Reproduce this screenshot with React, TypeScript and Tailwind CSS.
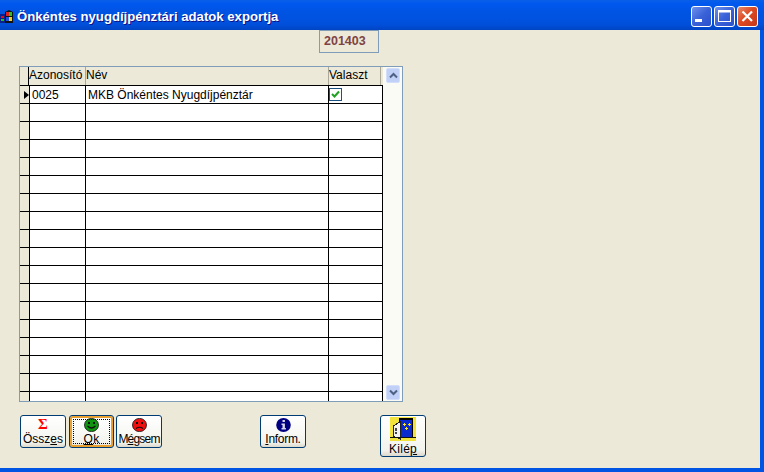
const FONT = '[font-family:"Liberation_Sans",Arial,sans-serif]';

const ROW_COUNT = 18;

function MinimizeIcon() {
  return (
    <svg width="21" height="21" viewBox="0 0 21 21" className="shrink-0">
      <rect x="4" y="13" width="7" height="3" fill="#fff" />
    </svg>
  );
}

function MaximizeIcon() {
  return (
    <svg width="21" height="21" viewBox="0 0 21 21" fill="none" className="shrink-0">
      <rect x="4.500" y="4.500" width="12" height="11" stroke="#fff" />
      <rect x="4" y="4" width="13" height="2.500" fill="#fff" />
    </svg>
  );
}

function CloseIcon() {
  return (
    <svg width="21" height="21" viewBox="0 0 21 21" className="shrink-0">
      <path d="M5.500 5.500l9.500 9.500M15 5.500l-9.500 9.500" stroke="#fff" strokeWidth="2.200" />
    </svg>
  );
}

function WindowIcon() {
  return (
    <svg width="14" height="14" viewBox="0 0 14 14" className="shrink-0">
      <rect x="0" y="4" width="5" height="9" fill="#0c1f8a" />
      <rect x="1" y="6" width="3" height="2" fill="#d11" />
      <rect x="1" y="9" width="3" height="2" fill="#1c1" />
      <path d="M5 2l4-2 4 2v11H5z" fill="#111" />
      <rect x="6" y="2" width="3" height="4" fill="#e02020" />
      <rect x="9" y="2" width="3" height="4" fill="#20c030" />
      <rect x="6" y="7" width="3" height="4" fill="#2050e0" />
      <rect x="9" y="7" width="3" height="4" fill="#f0d020" />
    </svg>
  );
}

function Smiley({ color, sad }: { color: string; sad?: boolean }) {
  return (
    <svg width="15" height="14" viewBox="0 0 15 14" className="mt-[2px]">
      <ellipse cx="7.500" cy="7" rx="7" ry="6.600" fill={color} stroke="#111" strokeWidth="0.800" />
      <rect x="4" y="4" width="2" height="2" fill="#111" />
      <rect x="9" y="4" width="2" height="2" fill="#111" />
      <path d={sad ? 'M4 10.500q3.500-2.500 7 0' : 'M3.500 8q4 4 8 0'} stroke="#111" fill="none" strokeWidth="1.200" />
    </svg>
  );
}

function InfoIcon() {
  return (
    <svg width="15" height="14" viewBox="0 0 15 14" className="mt-[2px]">
      <ellipse cx="7.500" cy="7" rx="7.300" ry="7" fill="#000080" />
      <rect x="6.500" y="2" width="2.400" height="2" fill="#d8d8e8" />
      <path d="M5.500 5.500h3.400v4.500h1v1.500H5.500V10h1V7h-1z" fill="#d8d8e8" />
    </svg>
  );
}

function DoorIcon() {
  return (
    <svg width="26" height="24" viewBox="0 0 26 24" shapeRendering="crispEdges" className="mt-px">
      <rect width="26" height="24" fill="#f2e23c" />
      <rect x="9" y="1" width="14" height="19" fill="#000" />
      <rect x="10" y="3" width="12" height="17" fill="#0a2ad0" />
      <path d="M3 9l7-4v17l-7-3z" fill="#f2f2f2" stroke="#222" />
      <rect x="5" y="11" width="2" height="3" fill="#444" />
      <rect x="5" y="15" width="2" height="2" fill="#444" />
      <path d="M14 6h1v1h1v1h-1v1h-1V8h-1V7h1zM19 6h1v1h1v1h-1v1h-1V8h-1V7h1zM16 10h1v1h1v1h-1v1h-1v-1h-1v-1h1z" fill="#ffe800" />
      <rect x="0" y="20" width="26" height="1" fill="#111" />
    </svg>
  );
}

function CaptionButton({ tone, children }: { tone: 'blue' | 'red'; children: React.ReactNode }) {
  const bg =
    tone === 'red'
      ? 'bg-[linear-gradient(135deg,#e98a6c,#dd4a22_45%,#c5371a)]'
      : 'bg-[linear-gradient(135deg,#6f90ea,#3a62d8_50%,#2a4fcb)]';
  return (
    <div className={`w-[21px] h-[21px] rounded-[3px] border border-white flex items-center justify-center ${bg}`}>
      {children}
    </div>
  );
}

function TitleBar() {
  return (
    <div className="h-[30px] shrink-0 flex items-center pr-[6px] pt-[3px] bg-[linear-gradient(180deg,#0a5ee8_0%,#0058ee_12%,#0054e3_40%,#0050dc_80%,#0044c4_100%)]">
      <WindowIcon />
      <span className={`ml-[3px] text-[13.150px] font-bold text-white ${FONT} [text-shadow:1px_1px_0_#0f1089]`}>
        Önkéntes nyugdíjpénztári adatok exportja
      </span>
      <div className="ml-auto flex gap-[2px]">
        <CaptionButton tone="blue"><MinimizeIcon /></CaptionButton>
        <CaptionButton tone="blue"><MaximizeIcon /></CaptionButton>
        <CaptionButton tone="red"><CloseIcon /></CaptionButton>
      </div>
    </div>
  );
}

function ScrollButton({ down }: { down?: boolean }) {
  return (
    <div className="h-[15px] w-[14px] rounded-[2px] border border-[#d3dffa] bg-[#c0d0f6] flex items-center justify-center">
      <svg width="9" height="7" viewBox="0 0 9 7">
        <path d={down ? 'M1 1.500l3.500 3.500 3.500-3.500' : 'M1 5.500l3.500-3.500 3.500 3.500'} stroke="#4d6185" strokeWidth="2" fill="none" />
      </svg>
    </div>
  );
}

function DataGrid() {
  return (
    <div className={`w-[384px] h-[336px] border border-[#7f9db9] bg-white flex overflow-hidden text-[12px] text-black ${FONT}`}>
      <div className="w-[363px] shrink-0 flex flex-col">
        <div className="h-[19px] shrink-0 flex bg-[#ece9d8] border-b border-black leading-[17px]">
          <div className="w-[9px] shrink-0 border-r border-black" />
          <div className="w-[56px] shrink-0">Azonosító</div>
          <div className="w-[243px] shrink-0 border-l border-[#aca899]">Név</div>
          <div className="w-[52px] shrink-0 border-l border-[#aca899]">Valaszt</div>
          <div className="w-px bg-[#aca899]" />
        </div>
        {Array.from({ length: ROW_COUNT }, (_, i) => (
          <div key={i} className="h-[18px] shrink-0 flex border-b border-black">
            <div className="w-[10px] shrink-0 bg-[#ece9d8] border-r border-black flex items-center justify-end">
              {i === 0 && (
                <svg width="5" height="8" viewBox="0 0 5 8">
                  <path d="M0 0l5 4-5 4z" fill="#000" />
                </svg>
              )}
            </div>
            <div className="w-[56px] shrink-0 border-r border-black pl-[2px] leading-[18px]">{i === 0 ? '0025' : ''}</div>
            <div className="w-[243px] shrink-0 border-r border-black pl-[2px] leading-[18px]">
              {i === 0 ? 'MKB Önkéntes Nyugdíjpénztár' : ''}
            </div>
            <div className="w-[54px] shrink-0 border-r border-black flex items-center">
              {i === 0 && (
                <div className="w-[13px] h-[13px] border border-[#1c5180] bg-white flex items-center justify-center">
                  <svg width="9" height="9" viewBox="0 0 9 9">
                    <path d="M1 4l2.500 2.500L8 1.500" stroke="#21a121" strokeWidth="2" fill="none" />
                  </svg>
                </div>
              )}
            </div>
          </div>
        ))}
      </div>
      <div className="flex-1 bg-[#fbfbf6] pl-[3px] pt-px pb-px flex flex-col justify-between">
        <ScrollButton />
        <ScrollButton down />
      </div>
    </div>
  );
}

function ToolButton({ label, hotkey, icon, focused, width, height, tracking, iconBox = 'h-[16px]' }: {
  label: string;
  hotkey: number;
  icon: React.ReactNode;
  focused?: boolean;
  width: string;
  height: string;
  tracking?: string;
  iconBox?: string;
}) {
  return (
    <div
      className={`${width} ${height} shrink-0 rounded-[3px] border border-[#003c74] bg-[linear-gradient(180deg,#ffffff,#f4f4ee_85%,#dcd8cc)] flex flex-col items-center ${FONT} text-[12px] text-black leading-[14px] ${focused ? 'shadow-[inset_0_0_0_2px_#e8a030]' : ''}`}
    >
      <div className={`flex flex-col items-center w-full h-full ${focused ? 'outline-1 outline-dotted outline-black -outline-offset-4' : ''}`}>
        <div className={`${iconBox} leading-none`}>{icon}</div>
        <span className={`whitespace-nowrap ${tracking ?? ''}`}>
          {label.slice(0, hotkey)}
          <span className="underline">{label[hotkey]}</span>
          {label.slice(hotkey + 1)}
        </span>
      </div>
    </div>
  );
}

export default function App() {
  return (
    <div className="w-[764px] h-[472px] flex flex-col overflow-hidden">
      <TitleBar />
      <div className="flex-1 flex flex-col bg-[#ece9d8] border-r-4 border-b-4 border-[#0054e3] pl-[19px]">
        <div className={`ml-[300px] w-[60px] h-[23px] border border-[#7f9db9] flex items-center pl-[4px] text-[12.500px] font-bold text-[#7f4343] ${FONT}`}>
          201403
        </div>
        <div className="mt-[13px]">
          <DataGrid />
        </div>
        <div className="mt-[13px] flex items-start pl-px">
          <ToolButton width="w-[46px]" height="h-[33px]" label="Összes" hotkey={4} icon={<span className="block mt-px h-[15px] [font-family:'Liberation_Serif',serif] text-[15px] font-bold text-[#f00] leading-[15px]">Σ</span>} />
          <div className="ml-[3px]">
            <ToolButton focused width="w-[45px]" height="h-[33px]" label="Ok" hotkey={0} tracking="tracking-[0.3px]" icon={<Smiley color="#0f9410" />} />
          </div>
          <div className="ml-[2px]">
            <ToolButton width="w-[46px]" height="h-[33px]" label="Mégsem" hotkey={1} tracking="tracking-[-0.8px]" icon={<Smiley color="#f01010" sad />} />
          </div>
          <div className="ml-[98px]">
            <ToolButton width="w-[46px]" height="h-[33px]" label="Inform." hotkey={0} tracking="tracking-[-0.300px]" icon={<InfoIcon />} />
          </div>
          <div className="ml-[74px]">
            <ToolButton width="w-[46px]" height="h-[42px]" iconBox="h-[26px]" label="Kilép" hotkey={4} tracking="tracking-[0.300px]" icon={<DoorIcon />} />
          </div>
        </div>
      </div>
    </div>
  );
}
